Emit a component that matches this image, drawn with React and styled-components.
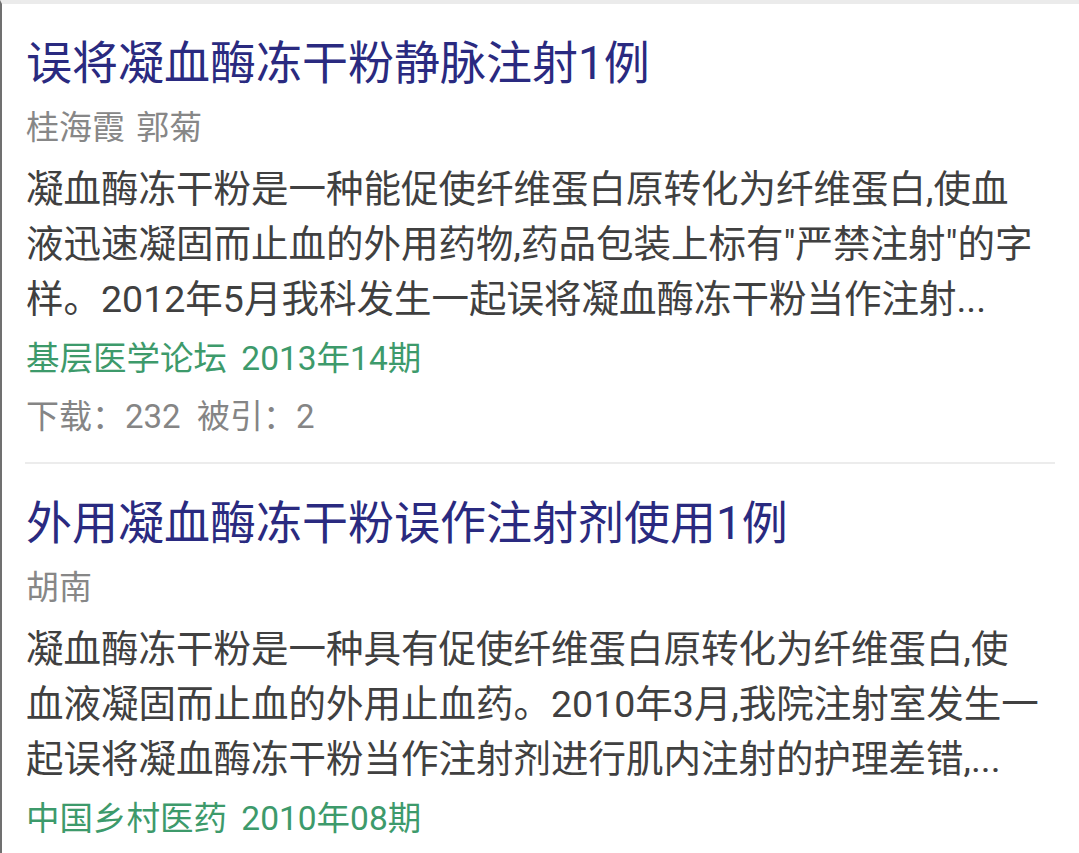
import React from 'react'
import styled, { createGlobalStyle } from 'styled-components'

const articles = [
    {
        title: '误将凝血酶冻干粉静脉注射1例',
        authors: '桂海霞 郭菊',
        abstract: '凝血酶冻干粉是一种能促使纤维蛋白原转化为纤维蛋白,使血液迅速凝固而止血的外用药物,药品包装上标有"严禁注射"的字样。2012年5月我科发生一起误将凝血酶冻干粉当作注射...',
        source: '基层医学论坛 2013年14期',
        stats: { downloads: 232, cited: 2 },
    },
    {
        title: '外用凝血酶冻干粉误作注射剂使用1例',
        authors: '胡南',
        abstract: '凝血酶冻干粉是一种具有促使纤维蛋白原转化为纤维蛋白,使血液凝固而止血的外用止血药。2010年3月,我院注射室发生一起误将凝血酶冻干粉当作注射剂进行肌内注射的护理差错,...',
        source: '中国乡村医药 2010年08期',
    },
]

const App = () => {
    return (
        <>
        <GlobalStyle />
        <Page>
            <ResultList>
                {articles.map((a) => (
                    <ResultItem key={a.title}>
                        <Title>{a.title}</Title>
                        <Authors>{a.authors}</Authors>
                        <Abstract>{a.abstract}</Abstract>
                        <Source>{a.source}</Source>
                        {a.stats && (
                            <Stats>下载：{a.stats.downloads}&nbsp; 被引：{a.stats.cited}</Stats>
                        )}
                    </ResultItem>
                ))}
            </ResultList>
        </Page>
        </>
    )
}

export default App;

const GlobalStyle = createGlobalStyle`
    html, body {
        margin: 0;
        padding: 0;
        background: #ffffff;
    }
    body {
        font-family: Roboto, "Noto Sans CJK SC", sans-serif;
        overflow: hidden;
    }
`

const Page = styled.div`
    min-height: 100vh;
    box-sizing: border-box;
    border-left: 2px solid #707070;
    border-top: 4px solid #ebebeb;
    padding: 0 24px 0 23px;
`

const ResultList = styled.div`
    display: flex;
    flex-direction: column;
`

const ResultItem = styled.div`
    padding: 29px 0 17px 1px;
    border-bottom: 2px solid #ececec;
`

const Title = styled.h2`
    margin: 0;
    font-size: 46px;
    font-weight: 400;
    line-height: 60px;
    color: #2a2a80;
    white-space: nowrap;
`

const Authors = styled.div`
    margin-top: 5px;
    font-size: 33px;
    line-height: 60px;
    color: #878787;
    word-spacing: 3px;
`

const Abstract = styled.p`
    margin: 4px 0 0;
    padding-right: 10px;
    font-size: 37.5px;
    line-height: 55px;
    color: #404040;
`

const Source = styled.div`
    margin-top: 4px;
    font-size: 33.5px;
    line-height: 56px;
    color: #3d9a6b;
    word-spacing: 6px;
`

const Stats = styled.div`
    margin-top: 2px;
    font-size: 33px;
    line-height: 56px;
    color: #858585;
`
